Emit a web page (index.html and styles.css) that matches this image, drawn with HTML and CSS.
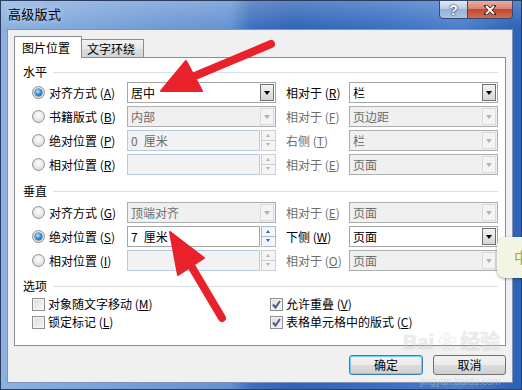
FILE: index.html
```html
<html>
  <head>
    <link rel="stylesheet" href="styles.css">
  </head>

  <body>
    <div class="window">
      <div class="titlebar">
        <span class="title">高级版式</span>
        <div class="caption-btns">
          <div class="cap help">?</div>
          <div class="cap close">
            <svg width="12" height="10" viewBox="0 0 12 10">
              <path d="M2 1 L10 9 M10 1 L2 9" stroke="#3a1a14" stroke-width="3.4" stroke-linecap="square"/>
              <path d="M2 1 L10 9 M10 1 L2 9" stroke="#fff" stroke-width="2"/>
            </svg>
          </div>
        </div>
      </div>

      <div class="client">
        <div class="tabs">
          <div class="tab active">图片位置</div>
          <div class="tab">文字环绕</div>
        </div>

        <div class="panel">
          <div class="group-title"><span>水平</span><i></i></div>
          <div class="rows">
            <label class="opt"><span class="radio checked"></span>对齐方式 (<u>A</u>)</label>
            <div class="combo"><span class="val">居中</span><span class="drop"></span></div>
            <span class="rel">相对于 (<u>R</u>)</span>
            <div class="combo"><span class="val">栏</span><span class="drop"></span></div>

            <label class="opt"><span class="radio"></span>书籍版式 (<u>B</u>)</label>
            <div class="combo off"><span class="val">内部</span><span class="drop"></span></div>
            <span class="rel off">相对于 (<u>F</u>)</span>
            <div class="combo off"><span class="val">页边距</span><span class="drop"></span></div>

            <label class="opt"><span class="radio"></span>绝对位置 (<u>P</u>)</label>
            <div class="spin off"><span class="box">0&ensp;厘米</span><span class="ud"><b class="up"></b><b class="dn"></b></span></div>
            <span class="rel off">右侧 (<u>T</u>)</span>
            <div class="combo off"><span class="val">栏</span><span class="drop"></span></div>

            <label class="opt"><span class="radio"></span>相对位置 (<u>R</u>)</label>
            <div class="spin off"><span class="box"></span><span class="ud"><b class="up"></b><b class="dn"></b></span></div>
            <span class="rel off">相对于 (<u>E</u>)</span>
            <div class="combo off"><span class="val">页面</span><span class="drop"></span></div>
          </div>

          <div class="group-title g2"><span>垂直</span><i></i></div>
          <div class="rows v">
            <label class="opt"><span class="radio"></span>对齐方式 (<u>G</u>)</label>
            <div class="combo off"><span class="val">顶端对齐</span><span class="drop"></span></div>
            <span class="rel off">相对于 (<u>E</u>)</span>
            <div class="combo off"><span class="val">页面</span><span class="drop"></span></div>

            <label class="opt"><span class="radio checked"></span>绝对位置 (<u>S</u>)</label>
            <div class="spin"><span class="box">7&ensp;厘米</span><span class="ud"><b class="up"></b><b class="dn"></b></span></div>
            <span class="rel">下侧 (<u>W</u>)</span>
            <div class="combo"><span class="val">页面</span><span class="drop"></span></div>

            <label class="opt"><span class="radio"></span>相对位置 (<u>I</u>)</label>
            <div class="spin off"><span class="box"></span><span class="ud"><b class="up"></b><b class="dn"></b></span></div>
            <span class="rel off">相对于 (<u>O</u>)</span>
            <div class="combo off"><span class="val">页面</span><span class="drop"></span></div>
          </div>

          <div class="group-title g3"><span>选项</span><i></i></div>
          <div class="checks">
            <label class="chk"><span class="box"></span>对象随文字移动 (<u>M</u>)</label>
            <label class="chk"><span class="box"><svg width="11" height="11" viewBox="0 0 11 11"><path d="M2 5.5 L4.5 8.5 L9 2" fill="none" stroke="#4a5d8c" stroke-width="2"/></svg></span>允许重叠 (<u>V</u>)</label>
            <label class="chk"><span class="box"></span>锁定标记 (<u>L</u>)</label>
            <label class="chk"><span class="box"><svg width="11" height="11" viewBox="0 0 11 11"><path d="M2 5.5 L4.5 8.5 L9 2" fill="none" stroke="#4a5d8c" stroke-width="2"/></svg></span>表格单元格中的版式 (<u>C</u>)</label>
          </div>
        </div>

        <div class="actions">
          <div class="btn default">确定</div>
          <div class="btn">取消</div>
        </div>
      </div>
      <div class="frame-bottom"></div>
    </div>

    <!-- overlays on the screenshot -->
    <div class="wm"><span class="wm-big">Bai</span><span class="wm-paw">❀</span><span class="wm-big">经验</span></div>
    <div class="wm-small">jingyan.baidu.com</div>

    <div class="tip">中</div>

    <svg class="marks" width="522" height="390" viewBox="0 0 522 390">
      <g fill="#e8212b" stroke="#e8212b" stroke-linecap="round" stroke-linejoin="round">
        <line x1="271" y1="44" x2="190" y2="78" stroke-width="8"/>
        <polygon points="161,91 186,61 202,91" stroke-width="2"/>
        <line x1="222" y1="318" x2="190" y2="264" stroke-width="8"/>
        <polygon points="170,232 204,258 178,275" stroke-width="2"/>
      </g>
    </svg>
  </body>
</html>
```

FILE: styles.css
```css
body {
  margin: 0;
  width: 522px;
  height: 390px;
  overflow: hidden;
  position: relative;
  font: 12px/16px "Noto Sans CJK SC", "Noto Sans", sans-serif;
  color: #000;
  background: #2f62b6;
}

u {
  text-decoration: underline;
}

.window {
  height: 390px;
  box-sizing: border-box;
  border: 1px solid #2a3d5e;
  display: flex;
  flex-direction: column;
  background:
    linear-gradient(rgba(255, 255, 255, 0.22), rgba(255, 255, 255, 0) 28px),
    linear-gradient(to right, #8cb1e0 0%, #6f9bd6 30%, #6592d2 44%, #3e6fbe 48%, #3064b7 56%, #3a6fc2 74%, #4b7ecb 88%, #2f63b8 98%);
}

.titlebar {
  height: 28px;
  display: flex;
  align-items: flex-start;
}

.title {
  margin: 5px 0 0 7px;
  font-size: 13px;
  letter-spacing: 0.3px;
  text-shadow: 0 0 6px rgba(255, 255, 255, 0.7);
}

.caption-btns {
  margin: -1px 8px 0 auto;
  display: flex;
}

.cap {
  height: 19px;
  box-sizing: border-box;
  border: 1px solid #34496b;
  display: flex;
  align-items: center;
  justify-content: center;
}

.cap.help {
  width: 29px;
  border-radius: 0 0 0 4px;
  background: linear-gradient(#e2eaf5, #bccde5 45%, #98b1d7 50%, #acc3e3);
  color: #fff;
  font: bold 14px/16px "Liberation Sans", sans-serif;
  text-shadow: 0 0 2px #1c2b44, 0 0 1px #1c2b44;
}

.cap.close {
  width: 45px;
  border-left: none;
  border-radius: 0 0 4px 0;
  background: linear-gradient(#eab0a3, #d98470 45%, #c2472f 50%, #d26c55);
}

.client {
  margin: 0 8px 0 6px;
  height: 354px;
  box-sizing: border-box;
  border: 1px solid #7f93b2;
  background: #f0f0f0;
  padding: 6px 6px 0 6px;
}

.frame-bottom {
  flex: 1;
}

.tabs {
  display: flex;
  align-items: flex-start;
  height: 21px;
}

.tab {
  margin-top: 3px;
  width: 62px;
  height: 18px;
  box-sizing: border-box;
  border: 1px solid #898c95;
  border-left: none;
  border-bottom: none;
  padding: 1px 0 0 5px;
  background: linear-gradient(#f3f3f3, #e8e8e8 50%, #dcdcdc 50%, #d4d4d4);
}

.tab.active {
  margin-top: 0;
  width: 68px;
  height: 22px;
  border-left: 1px solid #898c95;
  padding: 3px 0 0 7px;
  background: #fff;
  position: relative;
  z-index: 1;
}

.panel {
  width: 492px;
  height: 289px;
  box-sizing: border-box;
  border: 1px solid #898c95;
  background: #fff;
  padding: 6px 7px 0 8px;
}

.group-title {
  display: flex;
  align-items: center;
  height: 16px;
}

.group-title i {
  flex: 1;
  height: 1px;
  margin-left: 6px;
  background: #d5dfe5;
}

.group-title.g2 {
  margin-top: 8px;
}

.group-title.g3 {
  margin-top: 7px;
}

.rows {
  display: grid;
  grid-template-columns: 95px 149px 73px 149px;
  grid-auto-rows: 21px;
  row-gap: 3px;
  align-items: center;
  margin: 2px 0 0 9px;
}

.rows.v {
  margin-top: 3px;
}

.opt {
  display: flex;
  align-items: center;
}

.radio {
  width: 13px;
  height: 13px;
  box-sizing: border-box;
  border-radius: 50%;
  border: 1px solid #8e8f8f;
  background: radial-gradient(circle at 50% 40%, #fdfdfd, #e4e4e4 60%, #cfcfcf);
  margin-right: 4px;
  position: relative;
}

.radio.checked::after {
  content: "";
  position: absolute;
  left: 2px;
  top: 2px;
  width: 7px;
  height: 7px;
  border-radius: 50%;
  background: radial-gradient(circle at 40% 35%, #b6e6ff, #2a86d2 55%, #0c4b8c);
  box-shadow: 0 0 0 0.5px #1d4f80;
}

.rel {
  padding-left: 10px;
}

.off {
  color: #6d6d6d;
}

.combo {
  height: 21px;
  box-sizing: border-box;
  border: 1px solid #a6a6a6;
  background: #fff;
  display: flex;
}

.combo .val {
  flex: 1;
  padding-left: 3px;
  line-height: 19px;
}

.combo .drop {
  width: 14px;
  margin: 1px;
  box-sizing: border-box;
  border: 1px solid #707070;
  background: linear-gradient(#f4f4f4, #e4e4e4 50%, #d6d6d6);
  position: relative;
}

.combo .drop::after {
  content: "";
  position: absolute;
  left: 3px;
  top: 6px;
  border-left: 3.5px solid transparent;
  border-right: 3.5px solid transparent;
  border-top: 4px solid #000;
}

.combo.off {
  background: #f0f0f0;
  border-color: #adadad;
}

.combo.off .drop {
  border-color: #d9d9d9;
  background: #f4f4f4;
}

.combo.off .drop::after {
  border-top-color: #b2b2b2;
}

.spin {
  height: 21px;
  display: flex;
}

.spin .box {
  flex: 1;
  box-sizing: border-box;
  border: 1px solid #a6a6a6;
  background: #fff;
  padding-left: 3px;
  line-height: 19px;
}

.spin.off .box {
  border-color: #b6cbe3;
  background: #f2f2f2;
}

.spin .ud {
  width: 15px;
  margin-left: 1px;
  display: flex;
  flex-direction: column;
}

.spin .ud b {
  flex: 1;
  border: 1px solid #a9b9cf;
  background: #f2f5f9;
  position: relative;
}

.spin .ud b + b {
  border-top: none;
}

.spin .ud b::after {
  content: "";
  position: absolute;
  left: 4px;
  top: 3px;
  border-left: 2.5px solid transparent;
  border-right: 2.5px solid transparent;
}

.spin .ud .up::after {
  border-bottom: 3px solid #3d5f95;
}

.spin .ud .dn::after {
  top: 2px;
  border-top: 3px solid #3d5f95;
}

.spin.off .ud b {
  border-color: #cfcfcf;
  background: #f4f4f4;
}

.spin.off .ud .up::after {
  border-bottom-color: #b0b0b0;
}

.spin.off .ud .dn::after {
  border-top-color: #b0b0b0;
}

.checks {
  display: grid;
  grid-template-columns: 238px auto;
  grid-auto-rows: 16px;
  row-gap: 2px;
  align-items: center;
  margin: 2px 0 0 9px;
}

.chk {
  display: flex;
  align-items: center;
}

.chk .box {
  width: 13px;
  height: 13px;
  box-sizing: border-box;
  border: 1px solid #8e8f8f;
  background: linear-gradient(135deg, #dcdcdc, #f7f7f7);
  box-shadow: inset 0 0 0 1px #f4f4f4;
  margin-right: 3px;
  display: flex;
  align-items: center;
  justify-content: center;
}

.actions {
  display: flex;
  justify-content: flex-end;
  gap: 10px;
  margin-top: 9px;
}

.btn {
  width: 73px;
  height: 20px;
  box-sizing: border-box;
  border: 1px solid #707070;
  border-radius: 3px;
  background: linear-gradient(#f2f2f2, #ebebeb 50%, #dddddd 50%, #cfcfcf);
  text-align: center;
  line-height: 18px;
}

.btn.default {
  width: 74px;
  border-color: #3c7fb1;
  box-shadow: inset 0 0 0 1px #6fd1f7;
}

.wm {
  position: absolute;
  left: 403px;
  top: 330px;
  color: rgba(255, 255, 255, 0.5);
  text-shadow: 0 0 1px rgba(80, 80, 80, 0.35);
  opacity: 0.7;
}

.wm-big {
  font: bold 20px/24px "Liberation Sans", "Noto Sans CJK SC", sans-serif;
}

.wm-paw {
  font-size: 18px;
  margin: 0 4px;
}

.wm-small {
  position: absolute;
  left: 420px;
  top: 376px;
  font: 10px/11px "Liberation Sans", sans-serif;
  color: rgba(200, 200, 200, 0.5);
}

.tip {
  position: absolute;
  left: 497px;
  top: 237px;
  width: 40px;
  height: 41px;
  box-sizing: border-box;
  border-radius: 8px;
  background: #f4f4e2;
  box-shadow: 0 1px 3px rgba(0, 0, 0, 0.35);
  color: #a2aa4a;
  font-size: 15px;
  line-height: 40px;
  padding-left: 17px;
}

.marks {
  position: absolute;
  left: 0;
  top: 0;
  pointer-events: none;
}
```
